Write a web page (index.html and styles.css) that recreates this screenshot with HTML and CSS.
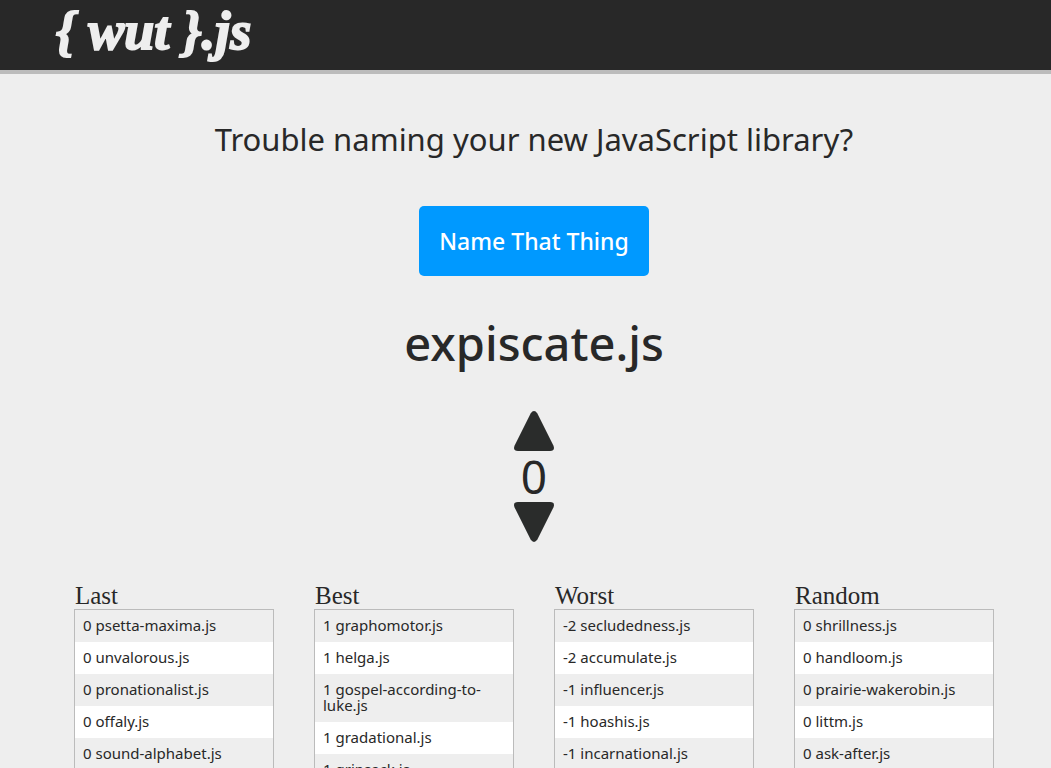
FILE: index.html
```html
<!DOCTYPE html>
<html lang="en">
<head>
<meta charset="utf-8">
<title>{ wut }.js</title>
<link rel="stylesheet" href="styles.css">
</head>
<body>
<header class="site-header"><h1 class="logo">{ wut }.js</h1></header>
<main class="content">
  <p class="tagline">Trouble naming your new JavaScript library?</p>
  <button class="generate" type="button">Name That Thing</button>
  <h2 class="name">expiscate.js</h2>
  <div class="vote">
    <button class="arrow" type="button" aria-label="Vote up"><svg viewBox="0 0 40 40"><path d="M16.6 2.400Q20-2.400 23.400 2.400L39.400 34.500Q41.500 40 36 40H4Q-1.500 40 .6 34.500Z"/></svg></button>
    <span class="score">0</span>
    <button class="arrow" type="button" aria-label="Vote down"><svg viewBox="0 0 40 40"><path d="M16.6 37.600Q20 42.400 23.400 37.600L39.400 5.500Q41.500 0 36 0H4Q-1.500 0 .6 5.500Z"/></svg></button>
  </div>
  <div class="lists">
    <section class="column"><h3 class="heading">Last</h3>
      <ul class="list"><li>0 psetta-maxima.js</li><li>0 unvalorous.js</li><li>0 pronationalist.js</li><li>0 offaly.js</li><li>0 sound-alphabet.js</li></ul></section>
    <section class="column"><h3 class="heading">Best</h3>
      <ul class="list"><li>1 graphomotor.js</li><li>1 helga.js</li><li>1 gospel-according-to-luke.js</li><li>1 gradational.js</li><li>1 gripsack.js</li></ul></section>
    <section class="column"><h3 class="heading">Worst</h3>
      <ul class="list"><li>-2 secludedness.js</li><li>-2 accumulate.js</li><li>-1 influencer.js</li><li>-1 hoashis.js</li><li>-1 incarnational.js</li></ul></section>
    <section class="column"><h3 class="heading">Random</h3>
      <ul class="list"><li>0 shrillness.js</li><li>0 handloom.js</li><li>0 prairie-wakerobin.js</li><li>0 littm.js</li><li>0 ask-after.js</li></ul></section>
  </div>
</main>
</body>
</html>
```
FILE: styles.css
```css
* { box-sizing: border-box; }
html { scrollbar-width: none; }
body {
  margin: 0;
  background: #eee;
  color: #282828;
  font-family: "Noto Sans", "Open Sans", sans-serif;
}
h1, h2, h3, p, ul { margin: 0; padding: 0; }
.site-header {
  padding: 1px 56px 9px;
  background: #282828;
  border-bottom: 4px solid #bbb;
}
.logo {
  color: #eee;
  font: italic bold 54px/60px "Liberation Serif", serif;
  -webkit-text-stroke: 2px #eee;
}
.content {
  display: flex;
  flex-direction: column;
  align-items: center;
  padding: 43px 40px 0 57px;
}
.tagline { font-size: 31px; line-height: 44px; }
.generate {
  margin-top: 45px;
  padding: 0 20px;
  border: 0;
  border-radius: 5px;
  background: #09f;
  color: #fff;
  font: 500 23px/70px "Noto Sans", "Open Sans", sans-serif;
}
.name { margin-top: 35px; font-size: 47px; line-height: 64px; font-weight: 500; }
.vote {
  display: flex;
  flex-direction: column;
  align-items: center;
  margin-top: 36px;
}
.arrow { width: 40px; height: 40px; padding: 0; border: 0; background: none; }
.arrow svg { display: block; fill: #2a2c2b; }
.score { font-size: 46px; line-height: 51px; }
.lists {
  display: grid;
  grid-template-columns: repeat(4, 1fr);
  gap: 40px;
  width: 100%;
  max-width: 920px;
  margin-top: 40px;
}
.heading { padding-left: 1px; font: 25px/27px "Liberation Serif", serif; }
.list { list-style: none; border: 1px solid #bbb; font-size: 15px; line-height: 16px; }
.list li { padding: 7px 8px 9px; }
.list li:nth-child(even) { background: #fff; }
```
